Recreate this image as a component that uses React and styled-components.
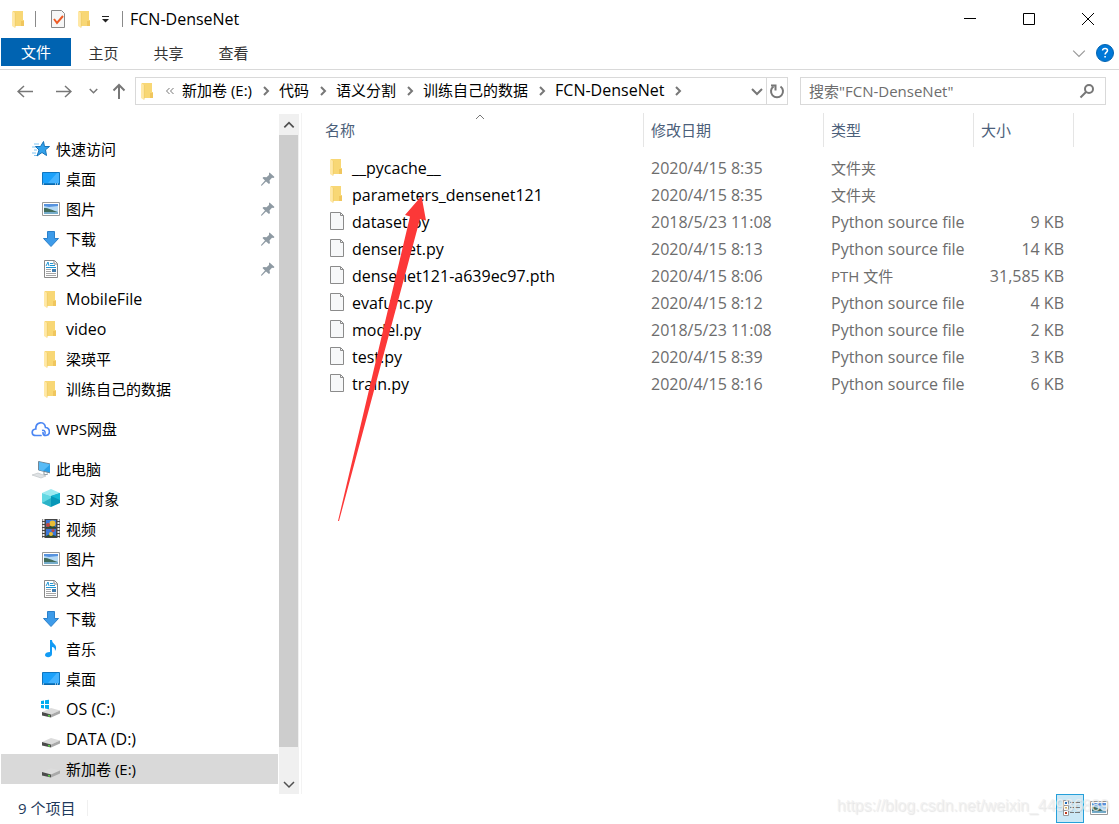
import React from 'react';
import styled, { createGlobalStyle } from 'styled-components';

const BORDER = '#d9d9d9';
const MUTED = '#6d6d6d';

const isLatin = (text) => !/[\u4e00-\u9fff]/.test(text);
const textSize = ({ $latin }) => ($latin ? 16 : 15);

const GlobalStyle = createGlobalStyle`
  * {
    box-sizing: border-box;
  }

  body {
    margin: 0;
    background: #fff;
    color: #000;
    font: 15px/20px "Open Sans", "Noto Sans CJK SC", sans-serif;
  }

  button, input {
    padding: 0;
    border: 0;
    background: none;
    color: inherit;
    font: inherit;
  }

  svg {
    flex: none;
  }
`;

const Window = styled.div`
  position: relative;
  display: flex;
  flex-direction: column;
  min-height: 100vh;
  overflow: hidden;
`;

const TitleBar = styled.header`
  display: flex;
  align-items: center;
  height: 38px;
  padding: 0 2px 0 5px;
`;

const ToolButton = styled.button`
  display: flex;
  flex: none;
  align-items: center;
  justify-content: center;
  width: ${({ $width }) => $width}px;
  height: 26px;
`;

const Rule = styled.span`
  width: 1px;
  height: 16px;
  margin: 0 7px 0 ${({ $before }) => $before}px;
  background: #8a8a8a;
`;

const WindowTitle = styled.h1`
  flex: 1;
  margin: 0;
  font-size: 16px;
  font-weight: 400;
`;

const WindowButton = styled.button`
  display: flex;
  align-items: center;
  justify-content: center;
  width: 59px;
  height: 38px;
`;

const Ribbon = styled.nav`
  display: flex;
  align-items: center;
  height: 32px;
  padding: 0 5px 2px 1px;
  border-bottom: 1px solid ${BORDER};
`;

const Tab = styled.button`
  width: 65px;
  height: 28px;
  color: #333;
`;

const FileTab = styled(Tab)`
  align-self: flex-start;
  width: 70px;
  background: #0063b1;
  color: #fff;
`;

const Spacer = styled.span`
  flex: 1;
`;

const AddressRow = styled.div`
  display: flex;
  align-items: center;
  height: 43px;
  padding: 0 13px 2px 5px;
`;

const AddressBar = styled.div`
  display: flex;
  flex: 1;
  align-items: center;
  height: 28px;
  margin: 0 12px 0 1px;
  padding-left: 1px;
  border: 1px solid ${BORDER};
`;

const Crumb = styled.button`
  height: 26px;
  padding-bottom: 2px;
  font-size: ${textSize}px;
  white-space: nowrap;
`;

const RefreshButton = styled(ToolButton)`
  border-left: 1px solid ${BORDER};
`;

const SearchBox = styled.label`
  display: flex;
  align-items: center;
  width: 306px;
  height: 28px;
  padding: 0 10px 0 8px;
  border: 1px solid ${BORDER};
`;

const SearchInput = styled.input`
  flex: 1;
  min-width: 0;
  outline: 0;

  &::placeholder {
    color: ${MUTED};
    opacity: 1;
  }
`;

const Body = styled.div`
  display: flex;
  flex: 1;
`;

const Sidebar = styled.aside`
  display: flex;
  flex: none;
  gap: 1px;
  width: 302px;
  padding: 0 2px 0 1px;
  border-right: 1px solid #f3f3f3;
`;

const Tree = styled.div`
  flex: 1;
  padding-top: 21px;
`;

const TreeGroup = styled.ul`
  margin: 0 0 10px;
  padding: 0;
  list-style: none;
`;

const TreeRow = styled.li`
  display: flex;
  align-items: center;
  height: 30px;
  padding: 0 2px 0 ${({ $root }) => ($root ? 29 : 39)}px;
  background: ${({ $selected }) => ($selected ? '#d9d9d9' : 'transparent')};
`;

const TreeLink = styled.a`
  display: flex;
  flex: 1;
  align-items: center;
  gap: 6px;
  color: #000;
  font-size: ${textSize}px;
  text-decoration: none;
`;

const ScrollBar = styled.div`
  display: flex;
  flex-direction: column;
  width: 20px;
  margin-top: 1px;
  background: #f0f0f0;
`;

const ScrollButton = styled.button`
  display: flex;
  align-items: center;
  justify-content: center;
  height: 21px;
`;

const ScrollThumb = styled.div`
  flex: 1;
  margin: 0 1px 26px 0;
  background: #cdcdcd;
`;

const Files = styled.main`
  position: relative;
  flex: 1;
  padding-right: 45px;
`;

const FileTable = styled.table`
  width: 100%;
  border-collapse: separate;
  border-spacing: 0;
  table-layout: fixed;
  color: ${MUTED};
`;

const HeadCell = styled.th`
  width: ${({ $width }) => ($width ? `${$width}px` : 'auto')};
  height: 34px;
  padding: 0 0 0 ${({ $width }) => ($width ? 7 : 23)}px;
  border-right: 1px solid #e5e5e5;
  color: #4c607a;
  font-weight: 400;
  text-align: left;
`;

const HeadGap = styled.tr`
  height: 7px;
`;

const Cell = styled.td`
  height: 27px;
  padding: 0 10px 0 7px;
  font-size: ${textSize}px;
  text-align: ${({ $right }) => ($right ? 'right' : 'left')};
  white-space: nowrap;
`;

const NameCell = styled(Cell)`
  padding: 0 0 0 24px;
  color: #000;
`;

const FileName = styled.span`
  display: flex;
  align-items: center;
  gap: 6px;

  svg {
    margin-bottom: 2px;
  }
`;

const SortMark = styled.span`
  position: absolute;
  top: -2px;
  left: 172px;
  display: flex;
`;

const Arrow = styled.svg`
  position: absolute;
  top: 83px;
  left: 35px;
  pointer-events: none;
`;

const StatusBar = styled.footer`
  display: flex;
  align-items: center;
  height: 30px;
  padding: 0 7px 2px 18px;
  color: #1e395b;
`;

const StatusRule = styled.span`
  width: 1px;
  height: 16px;
  margin-left: 12px;
  background: #f0f0f0;
`;

const ViewButton = styled.button`
  display: flex;
  align-items: center;
  justify-content: center;
  width: 28px;
  height: 29px;
  border: 1px solid ${({ $active }) => ($active ? '#26a0da' : 'transparent')};
  background: ${({ $active }) => ($active ? '#cbe8f6' : 'transparent')};
`;

const Watermark = styled.span`
  position: absolute;
  right: 10px;
  bottom: 8px;
  color: rgba(240, 240, 240, 0.8);
  font: 16px/20px "Liberation Sans", Arial, sans-serif;
  text-shadow: 1px 1px 1px rgba(0, 0, 0, 0.1);
  pointer-events: none;
`;

const Icon = ({ children, size = 20 }) => (
  <svg width={size} height={size} viewBox={`0 0 ${size} ${size}`} fill="none" aria-hidden="true">
    {children}
  </svg>
);

const FolderIcon = () => (
  <Icon>
    <path d="M5 2h10v9h1v6H5z" fill="#f8d775" />
    <path d="M13 12h3v5h-3z" fill="#f0c65e" />
    <path d="M4 2l3 2v15l-3-2z" fill="#ffe8a6" />
    <path d="M7.3 4v14.5" stroke="#edc966" strokeWidth=".6" />
  </Icon>
);

const StarIcon = () => (
  <Icon>
    <path d="M4 5h5M2 8h4M4 11h3M2 14h4M4 16.5h3" stroke="#7ec4f2" />
    <path
        d="M13.5 2.5l1 5h5l-4 3.300 1 5.700-4.500-3-5 3.500 2-6-3.500-3.500h5z"
        fill="#33a1ea"
        stroke="#1673b8" />
  </Icon>
);

const DesktopIcon = () => (
  <Icon>
    <path d="M2.5 3.5h17v12h-17z" fill="#1ba1fb" stroke="#0f76c0" />
    <path d="M8 14L17 4h2v10z" fill="#45b3ff" />
    <path d="M3 15h16" stroke="#075a98" />
    <path d="M3 15h1M15 15h1M17 15h1" stroke="#fff" />
  </Icon>
);

const PictureIcon = () => (
  <Icon>
    <path d="M2.5 3.5h17v13h-17z" fill="#fff" stroke="#999" />
    <path d="M4 5h14v10H4z" fill="#b4d9f5" />
    <path d="M4 5h14v2L9 8 4 7z" fill="#5793df" />
    <path d="M4 9c5 0 7 2 14 4v1H4z" fill="#416c5c" />
    <path d="M4 13h14v2H4z" fill="#76adcb" />
  </Icon>
);

const DownloadIcon = () => (
  <Icon>
    <path d="M7.5 2.5h7v7h4L11 17.5 3.5 9.5h4z" fill="#3d9be9" stroke="#2b80cb" />
  </Icon>
);

const DocumentIcon = () => (
  <Icon>
    <path d="M4.5 1.5h10l3 3v14h-13z" fill="#fff" stroke="#898989" />
    <path d="M14 2v3h3" stroke="#898989" />
    <path d="M6 7l2-4 1 4M10 4.5h3M10 6.5h5M6 8.5h10" stroke="#2196d4" />
    <path d="M6 10.5h5M6 12.5h5M6 14.5h10M6 16.5h10" stroke="#a5a5a5" />
    <path d="M12 10h4v3h-4z" fill="#427eae" />
  </Icon>
);

const CloudIcon = () => (
  <Icon>
    <path
        d="M11 16.5H6C1 16.500 1 10.500 5.800 10 5.500 2.500 14.500 1.500 15.500 8.500c5 .5 5.200 7.500.5 8-2.500.2-3-1.500-3-3"
        stroke="#4b86f3"
        strokeWidth="1.700"
        strokeLinecap="round" />
    <path d="M12 11.5c3-.8 4 2.200 2.500 5" stroke="#4b86f3" strokeWidth="1.5" />
  </Icon>
);

const ComputerIcon = () => (
  <Icon>
    <path d="M8.5 2.5l12 2.500v9l-12-3z" fill="#2a9fe8" stroke="#718696" />
    <path d="M9 3l11 2.500-7 6.500-4-1z" fill="#58bbf6" />
    <path d="M14 13v3l4-1" stroke="#87949c" />
    <path d="M2 16l6-2 8 3-5 2z" fill="#dfe2e4" stroke="#b9bfc3" strokeWidth=".6" />
  </Icon>
);

const CubeIcon = () => (
  <Icon>
    <path d="M2 4l9-4 9 4-9 3z" fill="#9ceaf1" />
    <path d="M2 4l9 3v11l-9-4z" fill="#62d8e3" />
    <path d="M11 7l9-3v10l-9 4z" fill="#0797b8" />
    <path d="M2 14l9-5v9z" fill="#2bb2c7" />
    <path d="M11 7l9-3v7z" fill="#16b8d4" />
  </Icon>
);

const VideoIcon = () => (
  <Icon>
    <path d="M2 0h18v19H2z" fill="#454545" />
    <path d="M3.5 0v19M18.5 0v19" stroke="#eee" strokeWidth="2" strokeDasharray="2 1" />
    <path d="M6 1h10v8H6zM6 10h10v8H6z" fill="#3a77d9" />
    <path d="M6 8l5-2 5 2v1H6zM6 17l4-2 6 2v1H6z" fill="#284d34" />
    <circle cx="12.5" cy="4.5" r="3" fill="#e9bd36" />
    <circle cx="8" cy="6" r="2" fill="#c5463b" />
    <circle cx="13" cy="11.5" r="1.5" fill="#c5463b" />
    <circle cx="11" cy="15" r="2" fill="#e9bd36" />
  </Icon>
);

const MusicIcon = () => (
  <Icon>
    <path d="M10 1h2c0 4 5 4 4 9l-1 2c0-3-1-4-3-4v7c0 4-7 4-7 1 0-2 2-3 5-3z" fill="#129bf4" />
  </Icon>
);

const DriveIcon = ({ system }) => (
  <Icon>
    <path d="M2 13l9-4 9 2.500-9 4z" fill="#dcdcdc" />
    <path d="M2 13l9 2.500v3L2 16.500z" fill="#4b4b4b" />
    <path d="M11 15.500l9-4v3l-9 4z" fill="#a9a9a9" />
    <path d="M8 16.500l2 .5" stroke="#5ed64c" strokeWidth="1.5" />
    {system && <path d="M1 2l3-.5V5H1zM5 1.300L9 .7V5H5zM1 6h3v3.500L1 9zM5 6h4v4.200l-4-.6z" fill="#00adef" />}
  </Icon>
);

const WindowsDriveIcon = () => <DriveIcon system />;

const PinIcon = () => (
  <Icon size={16}>
    <path
        d="M9.5 1.5L14.500 6l-1 1-1.500-.3-2.500 2.800.5 2.500-1 1L6 10.500 2 14.500l-1 .2V14l4-4.500L2.500 7l1-1 3 .3L9 4V2z"
        fill="#8e9aa3" />
  </Icon>
);

const FileIcon = () => (
  <Icon>
    <path d="M4.5 1.5h10l3 3v14h-13z" fill="#f7f8f9" stroke="#8b8b8b" />
    <path d="M14.5 2v2.500h3" stroke="#8b8b8b" />
  </Icon>
);

const CheckIcon = () => (
  <Icon>
    <path d="M3.5 1.5h10l3 3v14h-13z" fill="#f6f6f6" stroke="#898989" />
    <path d="M6 10l3 4 6-7" stroke="#ee5a24" strokeWidth="2" />
  </Icon>
);

const ListIcon = () => (
  <Icon>
    <path d="M3.5 2.5h5v5h-5zM3.5 7.5h5v5h-5zM3.5 12.5h5v5h-5z" fill="#fff" stroke="#999" />
    <path d="M5 5h2" stroke="#276fbd" strokeWidth="2" />
    <path d="M5 10h2" stroke="#cf9b35" strokeWidth="2" />
    <path d="M5 15h2" stroke="#c13a1e" strokeWidth="2" />
    <path d="M10 4.5h4M15 4.5h5M10 9.5h4M15 9.5h5M10 14.5h4M15 14.5h5" stroke="#777" />
  </Icon>
);

const CHEVRONS = {
  down: 'M1 4l5 5 5-5',
  right: 'M4 2l4 4-4 4',
  up: 'M2 8l4-4 4 4',
};

const Chevron = ({
  color = '#777',
  direction = 'right',
  size = 12,
  weight = 1.5,
}) => (
  <svg width={size} height={size} viewBox="0 0 12 12" fill="none" aria-hidden="true">
    <path d={CHEVRONS[direction]} stroke={color} strokeWidth={weight} />
  </svg>
);

const quickAccess = [
  ['桌面', DesktopIcon, true],
  ['图片', PictureIcon, true],
  ['下载', DownloadIcon, true],
  ['文档', DocumentIcon, true],
  ['MobileFile', FolderIcon],
  ['video', FolderIcon],
  ['梁瑛平', FolderIcon],
  ['训练自己的数据', FolderIcon],
];

const computer = [
  ['3D 对象', CubeIcon],
  ['视频', VideoIcon],
  ['图片', PictureIcon],
  ['文档', DocumentIcon],
  ['下载', DownloadIcon],
  ['音乐', MusicIcon],
  ['桌面', DesktopIcon],
  ['OS (C:)', WindowsDriveIcon],
  ['DATA (D:)', DriveIcon],
  ['新加卷 (E:)', DriveIcon],
];

const FOLDER_TYPE = '文件夹';

const files = [
  ['__pycache__', '2020/4/15 8:35', FOLDER_TYPE, ''],
  ['parameters_densenet121', '2020/4/15 8:35', FOLDER_TYPE, ''],
  ['dataset.py', '2018/5/23 11:08', 'Python source file', '9 KB'],
  ['densenet.py', '2020/4/15 8:13', 'Python source file', '14 KB'],
  ['densenet121-a639ec97.pth', '2020/4/15 8:06', 'PTH 文件', '31,585 KB'],
  ['evafunc.py', '2020/4/15 8:12', 'Python source file', '4 KB'],
  ['model.py', '2018/5/23 11:08', 'Python source file', '2 KB'],
  ['test.py', '2020/4/15 8:39', 'Python source file', '3 KB'],
  ['train.py', '2020/4/15 8:16', 'Python source file', '6 KB'],
];

const crumbs = ['新加卷 (E:)', '代码', '语义分割', '训练自己的数据', 'FCN-DenseNet'];

const TreeItem = ({
  icon: ItemIcon,
  label,
  pinned,
  root,
  selected,
}) => (
  <TreeRow $root={root} $selected={selected}>
    <TreeLink href="#" $latin={isLatin(label)}>
      <ItemIcon />
      {label}
    </TreeLink>
    {pinned && <PinIcon />}
  </TreeRow>
);

const TitleSection = () => (
  <TitleBar>
    <ToolButton $width={25} aria-label="窗口菜单"><FolderIcon /></ToolButton>
    <Rule $before={5} />
    <ToolButton $width={30} aria-label="属性"><CheckIcon /></ToolButton>
    <ToolButton $width={22} aria-label="新建文件夹"><FolderIcon /></ToolButton>
    <ToolButton $width={20} aria-label="自定义快速访问工具栏">
      <Icon size={8}>
        <path d="M1 1.5h7" stroke="#222" />
        <path d="M1 4h7L4.5 7.5z" fill="#222" />
      </Icon>
    </ToolButton>
    <Rule $before={7} />
    <WindowTitle>FCN-DenseNet</WindowTitle>
    <WindowButton aria-label="最小化">
      <Icon size={12}><path d="M0 5.5h12" stroke="#000" /></Icon>
    </WindowButton>
    <WindowButton aria-label="最大化">
      <Icon size={12}><path d="M.5.5h11v11H.5z" stroke="#000" /></Icon>
    </WindowButton>
    <WindowButton aria-label="关闭">
      <Icon size={12}><path d="M0 0l12 12M12 0L0 12" stroke="#000" /></Icon>
    </WindowButton>
  </TitleBar>
);

const RibbonSection = () => (
  <Ribbon>
    <FileTab>文件</FileTab>
    <Tab>主页</Tab>
    <Tab>共享</Tab>
    <Tab>查看</Tab>
    <Spacer />
    <ToolButton $width={34} aria-label="展开功能区">
      <Chevron direction="down" color="#999" size={14} weight={1} />
    </ToolButton>
    <ToolButton $width={18} aria-label="帮助">
      <Icon size={18}>
        <circle cx="9" cy="9" r="8.5" fill="#0078d7" stroke="#0063b1" />
        <path d="M6.5 6.5c.3-2.800 5-2.700 5 0 0 1.800-2.400 1.900-2.400 4" stroke="#fff" strokeWidth="1.5" />
        <path d="M8.3 12h1.600v1.600H8.300z" fill="#fff" />
      </Icon>
    </ToolButton>
  </Ribbon>
);

const AddressSection = () => (
  <AddressRow>
    <ToolButton $width={39} aria-label="后退">
      <Icon size={16}><path d="M16 8.5H1M7 3L1 8.5 7 14" stroke="#777" strokeWidth="1.5" /></Icon>
    </ToolButton>
    <ToolButton $width={39} aria-label="前进">
      <Icon size={16}><path d="M0 8.5h15M9 3l6 5.500L9 14" stroke="#777" strokeWidth="1.5" /></Icon>
    </ToolButton>
    <ToolButton $width={21} aria-label="最近浏览的位置">
      <Chevron direction="down" size={9} weight={2} />
    </ToolButton>
    <ToolButton $width={30} aria-label="上移">
      <Icon size={16}><path d="M8 16V2M2.5 7.5L8 2l5.500 5.500" stroke="#777" strokeWidth="2" /></Icon>
    </ToolButton>
    <AddressBar>
      <FolderIcon />
      <ToolButton $width={25} aria-label="更多位置">
        <Icon size={8}><path d="M3.5 1l-3 3 3 3M7.5 1l-3 3 3 3" stroke="#777" /></Icon>
      </ToolButton>
      {crumbs.map((crumb) => (
        <React.Fragment key={crumb}>
          <Crumb $latin={isLatin(crumb)}>{crumb}</Crumb>
          <ToolButton $width={27} aria-label={`${crumb} 子文件夹`}><Chevron weight={2} /></ToolButton>
        </React.Fragment>
      ))}
      <Spacer />
      <ToolButton $width={18} aria-label="以前的位置">
        <Chevron direction="down" weight={2} />
      </ToolButton>
      <RefreshButton $width={21} aria-label="刷新">
        <Icon size={16}>
          <path d="M11.5 3.5a6 6 0 1 1-7 0" stroke="#777" strokeWidth="2" />
          <path d="M2 2.5h4.500v5" stroke="#777" strokeWidth="2" />
        </Icon>
      </RefreshButton>
    </AddressBar>
    <SearchBox>
      <SearchInput type="search" aria-label="搜索" placeholder={'搜索"FCN-DenseNet"'} />
      <Icon size={16}>
        <circle cx="10" cy="6" r="4" stroke="#777" strokeWidth="2" />
        <path d="M7 9l-5.500 5.500" stroke="#777" strokeWidth="2" />
      </Icon>
    </SearchBox>
  </AddressRow>
);

const SidebarSection = () => (
  <Sidebar>
    <Tree>
      <TreeGroup>
        <TreeItem root icon={StarIcon} label="快速访问" />
        {quickAccess.map(([label, icon, pinned]) => (
          <TreeItem key={label} icon={icon} label={label} pinned={pinned} />
        ))}
      </TreeGroup>
      <TreeGroup>
        <TreeItem root icon={CloudIcon} label="WPS网盘" />
      </TreeGroup>
      <TreeGroup>
        <TreeItem root icon={ComputerIcon} label="此电脑" />
        {computer.map(([label, icon]) => (
          <TreeItem key={label} icon={icon} label={label} selected={label.includes('(E:)')} />
        ))}
      </TreeGroup>
    </Tree>
    <ScrollBar>
      <ScrollButton aria-label="向上滚动">
        <Chevron direction="up" color="#505050" size={14} />
      </ScrollButton>
      <ScrollThumb />
      <ScrollButton aria-label="向下滚动">
        <Chevron direction="down" color="#505050" />
      </ScrollButton>
    </ScrollBar>
  </Sidebar>
);

const FileSection = () => (
  <Files>
    <SortMark>
      <Chevron direction="up" weight={1} />
    </SortMark>
    <FileTable>
      <thead>
        <tr>
          <HeadCell>名称</HeadCell>
          <HeadCell $width={180}>修改日期</HeadCell>
          <HeadCell $width={150}>类型</HeadCell>
          <HeadCell $width={100}>大小</HeadCell>
        </tr>
        <HeadGap />
      </thead>
      <tbody>
        {files.map(([name, date, type, size]) => (
          <tr key={name}>
            <NameCell $latin>
              <FileName>
                {type === FOLDER_TYPE ? <FolderIcon /> : <FileIcon />}
                {name}
              </FileName>
            </NameCell>
            <Cell $latin>{date}</Cell>
            <Cell $latin={isLatin(type)}>{type}</Cell>
            <Cell $latin $right>{size}</Cell>
          </tr>
        ))}
      </tbody>
    </FileTable>
    <Arrow width="92" height="327" viewBox="0 0 92 327" aria-hidden="true">
      <path d="M84.5 0L89 24.5l-6-1.500L2 325H1L73 20.500 68 19z" fill="#fc3838" />
    </Arrow>
  </Files>
);

const App = () => (
  <Window>
    <GlobalStyle />
    <TitleSection />
    <RibbonSection />
    <AddressSection />
    <Body>
      <SidebarSection />
      <FileSection />
    </Body>
    <StatusBar>
      9 个项目
      <StatusRule />
      <Spacer />
      <ViewButton $active aria-label="详细信息"><ListIcon /></ViewButton>
      <ViewButton aria-label="大缩略图"><PictureIcon /></ViewButton>
    </StatusBar>
    <Watermark>https://blog.csdn.net/weixin_44936889</Watermark>
  </Window>
);

export default App;
